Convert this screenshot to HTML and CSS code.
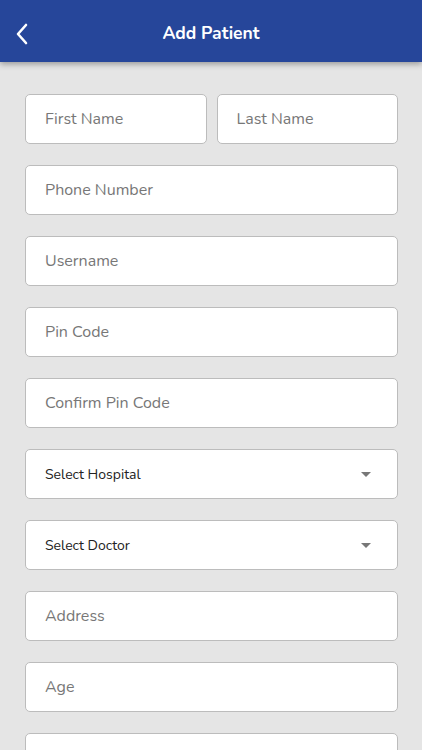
FILE: index.html
```html
<!DOCTYPE html>
<html>
<head>
<meta charset="utf-8">
<link rel="stylesheet" href="styles.css">
</head>
<body>
<header class="appbar">
  <span class="back">
    <svg width="14" height="22" viewBox="0 0 14 22"><path d="M11 2 L3 11 L11 20" fill="none" stroke="#fff" stroke-width="2.6" stroke-linecap="round" stroke-linejoin="round"/></svg>
  </span>
  <h1 class="title">Add Patient</h1>
</header>
<main class="form">
  <div class="row">
    <div class="field">First Name</div>
    <div class="field">Last Name</div>
  </div>
  <div class="field">Phone Number</div>
  <div class="field">Username</div>
  <div class="field">Pin Code</div>
  <div class="field">Confirm Pin Code</div>
  <div class="field select"><span>Select Hospital</span><i class="caret"></i></div>
  <div class="field select"><span>Select Doctor</span><i class="caret"></i></div>
  <div class="field">Address</div>
  <div class="field">Age</div>
  <div class="field"></div>
</main>
</body>
</html>
```
FILE: styles.css
```css
html, body { margin: 0; padding: 0; }
body {
  background: #e5e5e5;
  font-family: "Nunito", "Lato", "Noto Sans", sans-serif;
  width: 422px;
  height: 750px;
  overflow: hidden;
}
.appbar {
  position: relative;
  height: 62px;
  background: #26469a;
  display: flex;
  align-items: center;
  justify-content: center;
  box-shadow: 0 2px 6px rgba(0,0,0,0.35);
  z-index: 2;
}
.back {
  position: absolute;
  left: 15px;
  top: 23px;
  display: flex;
}
.title {
  margin: 3px 0 0;
  color: #fff;
  font-size: 17.5px;
  font-weight: 700;
}
.form {
  padding: 32px 24px 0 25px;
  display: flex;
  flex-direction: column;
  gap: 21px;
}
.row {
  display: flex;
  gap: 10px;
}
.row .field { flex: 1; }
.field {
  box-sizing: border-box;
  height: 50px;
  background: #fff;
  border: 1px solid #bcbcbc;
  border-radius: 5px;
  padding: 0 19px;
  display: flex;
  align-items: center;
  font-size: 16px;
  color: #777;
  flex-shrink: 0;
}
.select {
  justify-content: space-between;
  font-size: 14px;
  color: #222;
  padding-right: 26px;
}
.caret {
  width: 0;
  height: 0;
  border-left: 5px solid transparent;
  border-right: 5px solid transparent;
  border-top: 5px solid #777;
}
```
